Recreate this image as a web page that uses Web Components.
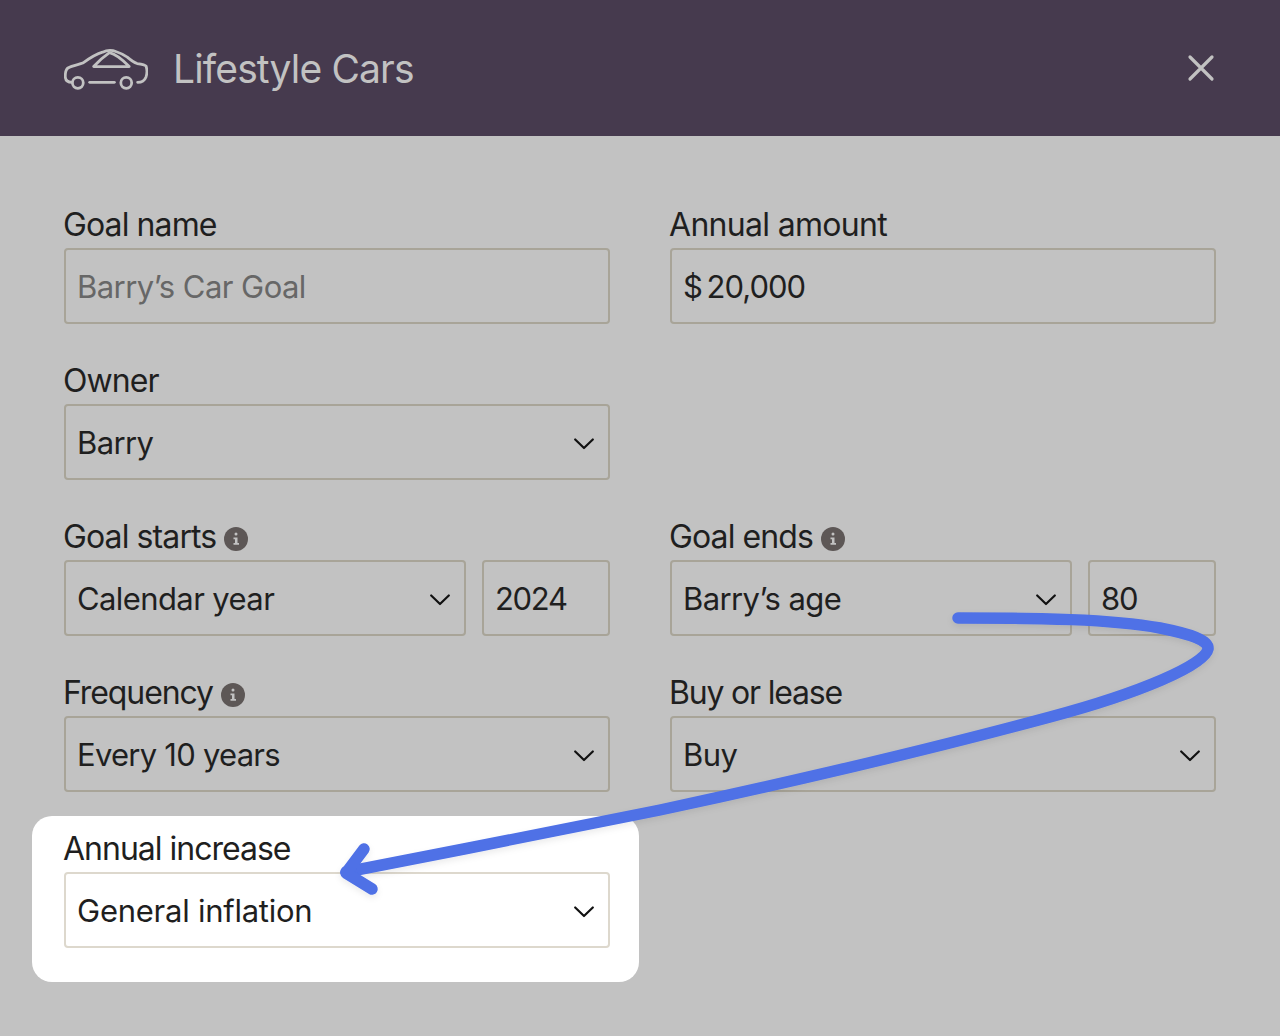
<!DOCTYPE html>
<html lang="en">
<head>
<meta charset="utf-8">
<title>Lifestyle Cars</title>
<style>
html, body { margin: 0; padding: 0; }
body { width: 1280px; height: 1036px; overflow: hidden; background: #c2c2c2; font-family: Inter, "Liberation Sans", sans-serif; color: #1f1f1f; }
</style>
</head>
<body>
<goal-dialog heading="Lifestyle Cars">
	<form-field label="Goal name">
		<text-box muted style="letter-spacing: -0.55px">Barry’s Car Goal</text-box>
	</form-field>
	<form-field label="Annual amount" style="--label-spacing: -0.7px">
		<text-box numeric style="letter-spacing: -1px">$ 20,000</text-box>
	</form-field>
	<form-field label="Owner">
		<select-box>Barry</select-box>
	</form-field>
	<div></div>
	<form-field label="Goal starts" info>
		<select-box>Calendar year</select-box>
		<text-box numeric>2024</text-box>
	</form-field>
	<form-field label="Goal ends" info>
		<select-box>Barry’s age</select-box>
		<text-box numeric>80</text-box>
	</form-field>
	<form-field label="Frequency" info style="--label-spacing: -1.1px">
		<select-box style="letter-spacing: -0.75px">Every 10 years</select-box>
	</form-field>
	<form-field label="Buy or lease" style="--label-spacing: -1.2px">
		<select-box>Buy</select-box>
	</form-field>
	<form-field label="Annual increase" highlight style="--label-spacing: -1px">
		<select-box style="letter-spacing: -0.25px">General inflation</select-box>
	</form-field>
</goal-dialog>

<script>
const boxStyles = `
	:host {
		display: flex;
		align-items: center;
		box-sizing: border-box;
		height: 76px;
		min-width: 0;
		padding: 0 14px 0 11px;
		border: 2px solid var(--field-border, #a8a498);
		border-radius: 4px;
		font-size: 31px;
		letter-spacing: -0.6px;
		color: #1f1f1f;
	}
`;

class GoalDialog extends HTMLElement {
	constructor() {
		super();
		this.attachShadow({ mode: 'open' });
		this.shadowRoot.innerHTML = `
		<style>
			:host { display: block; position: relative; width: 1280px; height: 1036px; }
			header {
				display: flex;
				align-items: center;
				box-sizing: border-box;
				height: 136px;
				padding: 0 64px;
				background: #463a4e;
				color: #c2c2c2;
			}
			h1 { margin: 0 0 0 25px; font-size: 39px; font-weight: 400; letter-spacing: -0.85px; }
			.close { margin-left: auto; margin-right: 1px; display: block; }
			.car { display: block; margin-top: 2px; }
			main {
				display: grid;
				grid-template-columns: 546px 546px;
				column-gap: 60px;
				row-gap: 0;
				padding: 72px 64px 0;
			}
			.arrow { position: absolute; left: 0; top: 0; pointer-events: none; }
		</style>
		<header>
			<svg class="car" width="84" height="42" viewBox="0 0 85 42" fill="none" stroke="#c2c2c2" stroke-width="2.800" stroke-linecap="round" stroke-linejoin="round">
				<path d="M8 34.500 C4 34.500 1.500 33 1.300 29 C1.200 25 1.800 21.500 4 20 C8 17.500 15 16.500 19 15 C26 10 32 6 39 4 C43 2 48 1.500 53 3.500 C58 5 61 7 64 9 C67 11.500 70 14 74 15.500 C78 16 82 16.500 83 18 C84 21 84 26 83 29 C81.500 33 78 34.500 74.500 34.500"/>
				<path d="M30 18.500 H66 C60 12.500 53 6 46 4.500 C41 8 35 13 30 18.500 Z"/>
				<circle cx="14" cy="35" r="5.500"/>
				<circle cx="63" cy="35" r="5.500"/>
				<path d="M26 34.500 H51"/>
			</svg>
			<h1>${this.getAttribute('heading')}</h1>
			<svg class="close" width="28" height="28" viewBox="0 0 28 28" fill="none" stroke="#c2c2c2" stroke-width="3.200" stroke-linecap="round">
				<path d="M3 3 L25 25 M25 3 L3 25"/>
			</svg>
		</header>
		<main><slot></slot></main>
		<svg class="arrow" width="1280" height="1036" viewBox="0 0 1280 1036" fill="none">
			<defs>
				<filter id="soft" x="-5%" y="-5%" width="110%" height="110%">
					<feDropShadow dx="0" dy="3" stdDeviation="3" flood-color="#000" flood-opacity="0.08"/>
				</filter>
			</defs>
			<g filter="url(#soft)" stroke="#4f71e6" stroke-width="11.500" stroke-linecap="round" stroke-linejoin="round">
				<path d="M958 618 C1040 618 1110 619 1160 628 C1190 634 1209 640 1208 649 C1205 665 1140 693 1050 717 C920 752 800 780 660 810 C560 830 450 852 346 872"/>
				<path d="M364 849 L346 873 L372 889"/>
			</g>
		</svg>`;
	}
}

class FormField extends HTMLElement {
	constructor() {
		super();
		this.attachShadow({ mode: 'open' });
		const info = this.hasAttribute('info') ? `
			<svg class="info" width="24" height="24" viewBox="0 0 24 24">
				<circle cx="12" cy="12" r="12" fill="#5d5756"/>
				<path d="M10.500 7 a1.500 1.500 0 0 1 3 0 a1.500 1.500 0 0 1 -3 0 Z M9.500 10.500 H13.500 V16 H15 V17.800 H9.500 V16 H11 V12.200 H9.500 Z" fill="#c2c2c2"/>
			</svg>` : '';
		this.shadowRoot.innerHTML = `
		<style>
			:host { display: block; height: 156px; box-sizing: border-box; min-width: 0; }
			:host([highlight]) {
				--field-border: #ddd8cd;
				position: relative;
				height: 166px;
				margin: -16px -29px 0 -32px;
				padding: 16px 29px 0 32px;
				background: #fff;
				border-radius: 20px;
			}
			.label {
				display: flex;
				align-items: center;
				box-sizing: border-box;
				height: 40px;
				padding-bottom: 8px;
				gap: 8px;
				margin-left: -1px;
				font-size: 32px;
				letter-spacing: var(--label-spacing, -0.9px);
				color: #1f1f1f;
			}
			.info { display: block; margin-top: 6px; }
			.controls { display: flex; gap: 16px; }
			::slotted(select-box) { flex: 1 1 0; }
			::slotted(text-box) { flex: 1 1 0; }
			::slotted(select-box:not(:only-child)) { flex: 0 0 402px; }
		</style>
		<div class="label"><span>${this.getAttribute('label')}</span>${info}</div>
		<div class="controls"><slot></slot></div>`;
	}
}

class TextBox extends HTMLElement {
	constructor() {
		super();
		this.attachShadow({ mode: 'open' });
		this.shadowRoot.innerHTML = `
		<style>
			${boxStyles}
			:host([muted]) { color: #676767; }
			:host([numeric]) { letter-spacing: -1.300px; word-spacing: -3px; }
		</style>
		<slot></slot>`;
	}
}

class SelectBox extends HTMLElement {
	constructor() {
		super();
		this.attachShadow({ mode: 'open' });
		this.shadowRoot.innerHTML = `
		<style>
			${boxStyles}
			svg { margin-left: auto; margin-top: 4px; display: block; flex: none; }
		</style>
		<slot></slot>
		<svg width="20" height="12" viewBox="0 0 20 12" fill="none" stroke="#111" stroke-width="2.200" stroke-linecap="round" stroke-linejoin="round">
			<path d="M1.200 1.500 L10 10 L18.800 1.500"/>
		</svg>`;
	}
}

customElements.define('goal-dialog', GoalDialog);
customElements.define('form-field', FormField);
customElements.define('text-box', TextBox);
customElements.define('select-box', SelectBox);
</script>
</body>
</html>
